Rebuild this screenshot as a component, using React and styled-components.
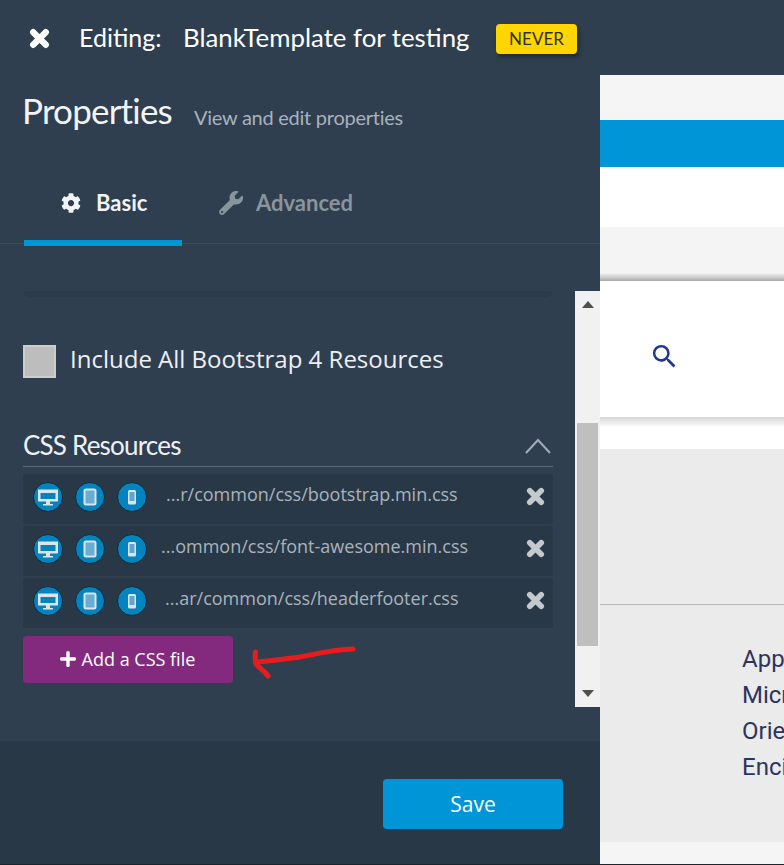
import React from 'react'
import styled, { createGlobalStyle } from 'styled-components'
import { FaCog, FaWrench, FaPlus } from 'react-icons/fa'
import { MdSearch } from 'react-icons/md'

const GlobalStyle = createGlobalStyle`
    html, body {
        margin: 0;
        padding: 0;
        width: 784px;
        height: 865px;
        overflow: hidden;
        background: #f5f5f5;
    }
    * { box-sizing: border-box; }
`

const Page = styled.div`
    width: 784px;
    height: 865px;
    display: flex;
    flex-direction: column;
    font-family: "Open Sans", sans-serif;
`

const TopBar = styled.div`
    height: 75px;
    flex: none;
    background: #2f3f50;
    display: flex;
    align-items: center;
    padding-left: 29px;
    color: #fff;
    font-family: Lato, sans-serif;
    font-size: 25px;
`

const CrossSvg = styled.svg`
    width: ${(p) => p.$size}px;
    height: ${(p) => p.$size}px;
    flex: none;
`

const Cross = ({ size, color, className }) => (
    <CrossSvg $size={size} className={className} viewBox="0 0 20 20" fill="none" stroke={color} strokeWidth="6" strokeLinecap="round">
        <path d="M4 4 L16 16 M16 4 L4 16" />
    </CrossSvg>
)

const CloseIcon = styled(Cross)`
    margin-right: 29px;
    margin-top: 1px;
`

const EditingLabel = styled.span`
    width: 104px;
    margin-top: -1px;
`

const TemplateName = styled.span`
    width: 313px;
    margin-top: -1px;
    font-size: 25.8px;
`

const Badge = styled.span`
    width: 81px;
    height: 30px;
    background: #ffd500;
    border-radius: 4px;
    box-shadow: 2px 3px 4px rgba(0, 0, 0, 0.35);
    color: #33302a;
    font-size: 17px;
    display: flex;
    align-items: center;
    justify-content: center;
    margin-top: 2px;
`

const Body = styled.div`
    flex: 1;
    display: flex;
    min-height: 0;
`

const Panel = styled.div`
    width: 600px;
    flex: none;
    background: #2f3f50;
    display: flex;
    flex-direction: column;
`

const TitleRow = styled.div`
    height: 95px;
    flex: none;
    display: flex;
    align-items: flex-start;
    padding: 12px 0 0 22px;
    color: #fff;
    font-family: Lato, sans-serif;
`

const Title = styled.h1`
    margin: 0;
    font-size: 35px;
    font-weight: 400;
    line-height: 46px;
    letter-spacing: -0.8px;
    color: #f2f4f5;
`

const Subtitle = styled.span`
    margin: 16px 0 0 22px;
    font-size: 20px;
    line-height: 28px;
    color: #a9b2bb;
    letter-spacing: -0.26px;
`

const Tabs = styled.div`
    height: 74px;
    flex: none;
    display: flex;
    padding-left: 24px;
    border-bottom: 1px solid #3b4c5d;
    font-family: Lato, sans-serif;
`

const Tab = styled.div`
    height: 76px;
    width: ${(p) => p.$width}px;
    display: flex;
    align-items: flex-start;
    padding: 19px 0 0 ${(p) => p.$indent}px;
    gap: ${(p) => p.$gap}px;
    font-size: 22px;
    font-weight: 700;
    color: ${(p) => (p.$active ? '#f1f3f4' : '#8a949d')};
    border-bottom: ${(p) => (p.$active ? '6px solid #0095d6' : 'none')};

    svg {
        width: ${(p) => p.$icon}px;
        height: ${(p) => p.$icon}px;
        margin-top: ${(p) => p.$iconTop}px;
    }
`

const ScrollFrame = styled.div`
    height: 416px;
    margin-top: 47px;
    flex: none;
    display: flex;
`

const ScrollContent = styled.div`
    width: 575px;
    padding: 0 22px 0 23px;
`

const Divider = styled.div`
    height: 6px;
    width: 530px;
    background: #2b3a4a;
    border-radius: 0 0 6px 6px;
`

const CheckRow = styled.div`
    display: flex;
    align-items: center;
    margin-top: 48px;
    gap: 14px;
    color: #eef0f2;
    font-size: 24px;
    line-height: 33px;
`

const CheckBox = styled.span`
    width: 33px;
    height: 33px;
    background: #bdbdbd;
    border: 2px solid #cfcdc8;
`

const CheckLabel = styled.span`
    margin-top: -6px;
`

const SectionHead = styled.div`
    display: flex;
    align-items: center;
    justify-content: space-between;
    height: 40px;
    margin-top: 49px;
    border-bottom: 1px solid #5b6b7a;
    padding: 0 2px 4px 0;
`

const SectionTitle = styled.h2`
    margin: 0;
    font-family: Lato, sans-serif;
    font-size: 26px;
    font-weight: 400;
    color: #eef1f3;
    letter-spacing: -0.8px;
`

const Chevron = styled.svg`
    width: 26px;
    height: 16px;
    margin-top: 2px;
`

const ResourceList = styled.div`
    display: flex;
    flex-direction: column;
    gap: 2px;
    margin-top: 7px;
`

const ResourceRow = styled.div`
    height: 50px;
    background: #293847;
    border-radius: 3px;
    display: flex;
    align-items: center;
    padding: 0 0 4px 10px;
    position: relative;
`

const DeviceIcons = styled.div`
    display: flex;
    gap: 12px;
`

const DeviceIcon = styled.span`
    width: 30px;
    height: 30px;
    border-radius: 50%;
    background: #0583bd;
    border: 1px solid #14293b;
    display: flex;
    align-items: center;
    justify-content: center;

    svg {
        width: 28px;
        height: 28px;
    }
`

const ResourcePath = styled.span`
    margin: -7px 0 0 ${(p) => p.$indent}px;
    font-size: 18px;
    color: #aab3bc;
    white-space: nowrap;
`

const RemoveIcon = styled(Cross)`
    position: absolute;
    right: 8px;
    top: 13px;
`

const AddRow = styled.div`
    display: flex;
    align-items: flex-start;
`

const AddButton = styled.button`
    width: 210px;
    height: 47px;
    margin-top: 8px;
    background: #832a7f;
    border: none;
    border-radius: 4px;
    color: #fff;
    font-family: "Open Sans", sans-serif;
    font-size: 18px;
    display: flex;
    align-items: center;
    justify-content: center;
    gap: 5px;
    padding: 0 2px 2px 0;

    svg {
        width: 18px;
        height: 18px;
    }
`

const RedArrow = styled.svg`
    width: 106px;
    height: 36px;
    margin: 17px 0 0 17px;
`

const Scrollbar = styled.div`
    width: 25px;
    flex: none;
    background: #f1f1f1;
    display: flex;
    flex-direction: column;
    align-items: center;
    justify-content: space-between;
    padding: 10px 0 10px;
    position: relative;
`

const ScrollArrow = styled.span`
    width: 0;
    height: 0;
    border-left: 6px solid transparent;
    border-right: 6px solid transparent;
    border-${(p) => (p.$up ? 'bottom' : 'top')}: 7px solid #505050;
`

const ScrollThumb = styled.div`
    position: absolute;
    left: 2px;
    top: 132px;
    width: 21px;
    height: 223px;
    background: #bfbfbf;
`

const PanelFooter = styled.div`
    margin-top: 34px;
    flex: 1;
    background: #293847;
    display: flex;
    justify-content: flex-end;
    padding: 38px 37px 0 0;
`

const SaveButton = styled.button`
    width: 180px;
    height: 50px;
    background: #0095d6;
    border: none;
    border-radius: 4px;
    color: #fff;
    font-family: "Open Sans", sans-serif;
    font-size: 21px;
`

const Site = styled.div`
    flex: 1;
    min-width: 0;
    display: flex;
    flex-direction: column;
    overflow: hidden;
    background: #f5f5f5;
`

const Band = styled.div`
    height: ${(p) => p.$height}px;
    flex: none;
    background: ${(p) => p.$bg};
`

const ShadowBand = styled(Band)`
    background: linear-gradient(to bottom, ${(p) => p.$from}, ${(p) => p.$to});
    background-size: 100% ${(p) => p.$fade}px;
    background-repeat: no-repeat;
    background-position: ${(p) => (p.$bottom ? 'bottom' : 'top')};
    background-color: ${(p) => p.$bg};
`

const SearchBand = styled.div`
    height: 136px;
    flex: none;
    background: #fff;
    display: flex;
    align-items: center;
    padding: 14px 0 0 49px;
    color: #1f3796;

    svg {
        width: 31px;
        height: 31px;
    }
`

const Content = styled.div`
    height: 393px;
    flex: none;
    background: #ebebeb;
    padding-top: 155px;
`

const ContentRule = styled.div`
    height: 1px;
    background: #b9b9b9;
`

const LinkList = styled.ul`
    list-style: none;
    margin: 36px 0 0;
    padding: 0 0 0 142px;
    font-family: Roboto, sans-serif;
    font-size: 24px;
    line-height: 36px;
    color: #2b3560;
    white-space: nowrap;
`

const BottomEdge = styled.div`
    height: 1px;
    flex: none;
    background: #1c252d;
`

const DesktopGlyph = () => (
    <svg viewBox="0 0 28 28">
        <path fill="#dbe4e9" fillRule="evenodd" d="M4 6.5 H24 V18.5 H16 V21 H19 V22.5 H9 V21 H12 V18.5 H4 Z M6.5 10 V16 H21.5 V10 Z" />
    </svg>
)

const TabletGlyph = () => (
    <svg viewBox="0 0 28 28">
        <rect x="8.5" y="6.5" width="11" height="15" rx="1.5" fill="#69aed2" stroke="#dbe4e9" strokeWidth="2" />
    </svg>
)

const PhoneGlyph = () => (
    <svg viewBox="0 0 28 28">
        <rect x="10" y="7" width="8" height="14.5" rx="1.5" fill="#dbe4e9" />
        <rect x="11.5" y="9" width="5" height="9" fill="#5ea8cf" />
    </svg>
)

const resources = [
    { path: '...r/common/css/bootstrap.min.css', indent: 19 },
    { path: '...ommon/css/font-awesome.min.css', indent: 14 },
    { path: '...ar/common/css/headerfooter.css', indent: 18 },
]

const App = () => {
    return (
        <Page>
            <GlobalStyle />
            <TopBar>
                <CloseIcon size={21} color="#fff" />
                <EditingLabel>Editing:</EditingLabel>
                <TemplateName>BlankTemplate for testing</TemplateName>
                <Badge>NEVER</Badge>
            </TopBar>
            <Body>
                <Panel>
                    <TitleRow>
                        <Title>Properties</Title>
                        <Subtitle>View and edit properties</Subtitle>
                    </TitleRow>
                    <Tabs>
                        <Tab $active $width={158} $indent={37} $gap={15} $icon={20} $iconTop={4}>
                            <FaCog />
                            Basic
                        </Tab>
                        <Tab $width={200} $indent={37} $gap={13} $icon={24} $iconTop={2}>
                            <FaWrench />
                            Advanced
                        </Tab>
                    </Tabs>
                    <ScrollFrame>
                        <ScrollContent>
                            <Divider />
                            <CheckRow>
                                <CheckBox />
                                <CheckLabel>Include All Bootstrap 4 Resources</CheckLabel>
                            </CheckRow>
                            <SectionHead>
                                <SectionTitle>CSS Resources</SectionTitle>
                                <Chevron viewBox="0 0 26 16" fill="none" stroke="#a3adb7" strokeWidth="2">
                                    <path d="M1 15 L13 2 L25 15" />
                                </Chevron>
                            </SectionHead>
                            <ResourceList>
                                {resources.map((r) => (
                                    <ResourceRow key={r.path}>
                                        <DeviceIcons>
                                            <DeviceIcon><DesktopGlyph /></DeviceIcon>
                                            <DeviceIcon><TabletGlyph /></DeviceIcon>
                                            <DeviceIcon><PhoneGlyph /></DeviceIcon>
                                        </DeviceIcons>
                                        <ResourcePath $indent={r.indent}>{r.path}</ResourcePath>
                                        <RemoveIcon size={19} color="#c3c9ce" />
                                    </ResourceRow>
                                ))}
                            </ResourceList>
                            <AddRow>
                                <AddButton>
                                    <FaPlus />
                                    Add a CSS file
                                </AddButton>
                                <RedArrow viewBox="0 0 106 36" fill="none" stroke="#e81c1c" strokeWidth="5" strokeLinecap="round" strokeLinejoin="round">
                                    <path d="M103 4 C87 4 70 8 50 12 C35 14 20 16 7 17 M5.5 7 C5 12 5 16 6 19 C9 23 14 25 18 31" />
                                </RedArrow>
                            </AddRow>
                        </ScrollContent>
                        <Scrollbar>
                            <ScrollArrow $up />
                            <ScrollThumb />
                            <ScrollArrow />
                        </Scrollbar>
                    </ScrollFrame>
                    <PanelFooter>
                        <SaveButton>Save</SaveButton>
                    </PanelFooter>
                </Panel>
                <Site>
                    <Band $height={45} $bg="#f5f5f5" />
                    <Band $height={47} $bg="#0095d6" />
                    <Band $height={60} $bg="#fff" />
                    <ShadowBand $height={54} $bg="#f4f4f4" $from="#f4f4f4" $to="#a8a8a8" $fade={8} $bottom />
                    <SearchBand>
                        <MdSearch />
                    </SearchBand>
                    <ShadowBand $height={32} $bg="#fff" $from="#d6d6d6" $to="#fff" $fade={10} />
                    <Content>
                        <ContentRule />
                        <LinkList>
                            <li>App</li>
                            <li>Micr</li>
                            <li>Orie</li>
                            <li>Enci</li>
                        </LinkList>
                    </Content>
                </Site>
            </Body>
            <BottomEdge />
        </Page>
    )
}

export default App
